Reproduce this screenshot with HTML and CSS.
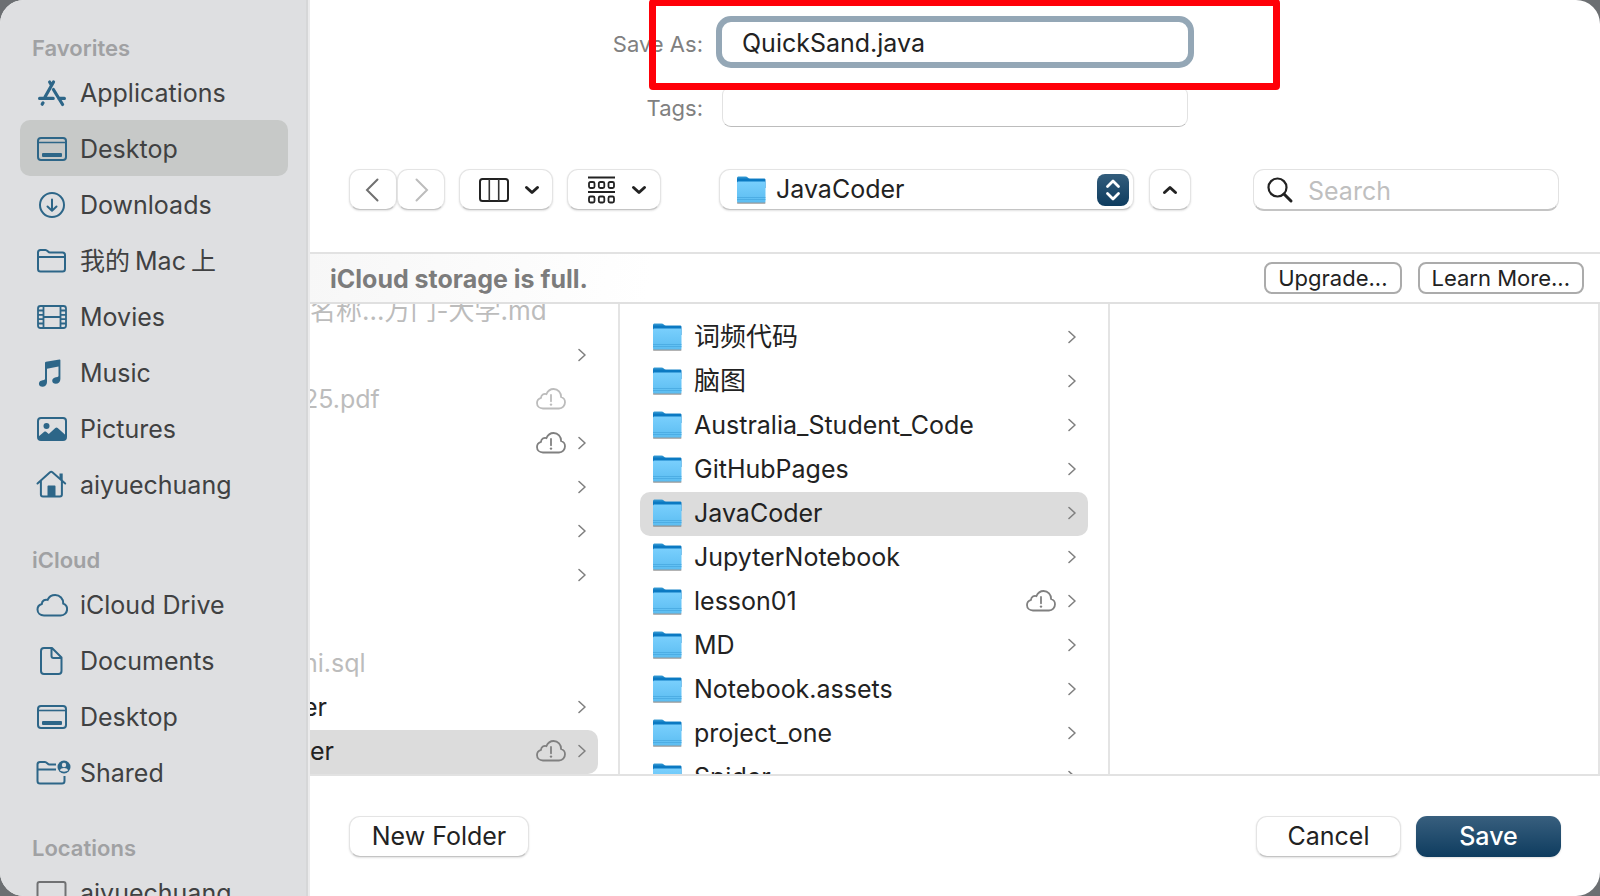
FILE: index.html
```html
<!DOCTYPE html>
<html lang="en">
<head>
<meta charset="utf-8">
<title>Save</title>
<link rel="stylesheet" href="styles.css">
</head>
<body>
<svg class="sprite" aria-hidden="true">
  <defs>
    <linearGradient id="folder-front" x1="0" y1="0" x2="0" y2="1"><stop offset="0" stop-color="#79cffd"/><stop offset="1" stop-color="#5cbdf1"/></linearGradient>
    <linearGradient id="folder-back" x1="0" y1="0" x2="0" y2="1"><stop offset="0" stop-color="#3d9fd6"/><stop offset=".25" stop-color="#0b79c2"/></linearGradient>
  </defs>
  <symbol id="apps" viewBox="0 0 32 32"><g fill="none" stroke="currentColor" stroke-width="3.2" stroke-linecap="round"><path d="M17.5 5 9 20M13.600 5l1.800 3M17.400 12.500l9.200 15M3.600 21.400h13.600M22.800 21.400h5.600M6.200 27.200l.8-1.300"/></g></symbol>
  <symbol id="desktop" viewBox="0 0 32 32"><rect x="2" y="5" width="28" height="22" rx="3" fill="none" stroke="currentColor" stroke-width="2"/><path d="M2 9.500h28" stroke="currentColor" stroke-width="1.600"/><rect x="6" y="20" width="20" height="4" rx="1" fill="currentColor"/></symbol>
  <symbol id="downloads" viewBox="0 0 32 32"><g fill="none" stroke="currentColor" stroke-width="2" stroke-linecap="round" stroke-linejoin="round"><circle cx="16" cy="16" r="12"/><path d="M16 10.500v11M11.500 17.500l4.500 4.300 4.500-4.300"/></g></symbol>
  <symbol id="folder-line" viewBox="0 0 32 32"><path d="M2 24V7.500C2 6 3 5 4.500 5h5c2 0 2.500 2.500 4.500 2.500h12.500C28 7.500 29 8.500 29 10v14c0 1.500-1 2.500-2.500 2.500h-22C3 26.500 2 25.500 2 24ZM2 12h27" fill="none" stroke="currentColor" stroke-width="2"/></symbol>
  <symbol id="movies" viewBox="0 0 32 32"><g fill="none" stroke="currentColor" stroke-width="1.800"><rect x="2" y="5" width="28" height="22" rx="2.500"/><path d="M7.500 5v22M24.500 5v22M7.500 16h17M2 9.500h5.500M2 13.800h5.500M2 18.200h5.500M2 22.500h5.500M24.500 9.500H30M24.500 13.800H30M24.500 18.200H30M24.500 22.500H30"/></g></symbol>
  <symbol id="music" viewBox="0 0 32 32"><path d="M9 6.200c0-.8.300-1.200 1-1.400L23.500 2.500c.6-.1.900.2.900.8V22c0 3-2 4.800-4.700 4.800-2 0-3.500-1.300-3.500-3.100 0-2 1.500-3.100 3.700-3.500l1.600-.3c.7-.1 1-.5 1-1.200V9.500l-11.500 2.200V25c0 3-2 4.800-4.600 4.800-2 0-3.500-1.300-3.500-3.100 0-2 1.500-3.200 3.700-3.500l1.400-.3c.7-.1 1-.5 1-1.200Z" fill="currentColor"/></symbol>
  <symbol id="pictures" viewBox="0 0 32 32"><rect x="2" y="5" width="28" height="22" rx="3" fill="none" stroke="currentColor" stroke-width="2"/><circle cx="10.500" cy="13" r="3" fill="currentColor"/><path d="M2 24l6.200-5.200c.7-.5 1.200-.5 1.900 0l2.700 2.200 6.500-6c.8-.7 1.600-.7 2.400 0L30 22.500V25c0 1.500-1 2-2.500 2h-23C3 27 2 26 2 24Z" fill="currentColor"/></symbol>
  <symbol id="home" viewBox="0 0 32 32"><path d="M1.500 14.500 14 3.300c.9-.7 1.500-.7 2.400 0l12.800 11.200M4.900 12v13.500c0 1.300.7 2 2 2h17c1.300 0 2-.7 2-2V12" fill="none" stroke="currentColor" stroke-width="2" stroke-linecap="round"/><path d="M11.500 28V17.500c0-.7.400-1 1-1h6c.6 0 1 .3 1 1V28ZM23.500 4.500h3.200V12l-3.200-2.800Z" fill="currentColor"/></symbol>
  <symbol id="cloud" viewBox="0 0 32 32"><path d="M8 26.500C4.300 26.500 1.500 24 1.500 20.600c0-2.700 1.700-4.900 4.300-5.600 .2-3.300 3-5 5.800-4.100C13 7.800 16 6 19.200 6c4.700 0 8.200 3.800 8 8.600 2.400.8 3.900 2.900 3.900 5.500 0 3.600-2.700 6.400-6.400 6.400Z" fill="none" stroke="currentColor" stroke-width="2"/></symbol>
  <symbol id="document" viewBox="0 0 32 32"><path d="M8 3h8l9.500 9.500V26c0 2-1 3-3 3H8c-2 0-3-1-3-3V6c0-2 1-3 3-3ZM15.500 3v8c0 1.300.7 2 2 2h8" fill="none" stroke="currentColor" stroke-width="2" stroke-linejoin="round"/></symbol>
  <symbol id="shared" viewBox="0 0 36 32"><path d="M20 7.500h-6.500C11.500 7.500 11 5 9 5H4C2.500 5 1.500 6 1.500 7.500V24c0 1.500 1 2.500 2.500 2.500h22c1.500 0 2.500-1 2.500-2.500v-5M1.500 12.500H20" fill="none" stroke="currentColor" stroke-width="2"/><circle cx="28" cy="10" r="6.500" fill="currentColor"/><circle cx="28" cy="8" r="2.200" fill="#dedfe1"/><path d="M24 13.500c.6-3.200 7.400-3.200 8 0-2 1.500-6 1.500-8 0Z" fill="#dedfe1"/></symbol>
  <symbol id="computer" viewBox="0 0 32 32"><rect x="1.500" y="5" width="28" height="20" rx="2" fill="none" stroke="currentColor" stroke-width="2"/><path d="M0 28h31" stroke="currentColor" stroke-width="2"/></symbol>
  <symbol id="folder" viewBox="0 0 30 30"><path d="M1 3.500C1 2 1.500 1.500 3 1.500h6.500c2 0 2.500 2 4.500 2H28c1 0 1.500.5 1.500 1.500v8H1Z" fill="url(#folder-back)"/><rect x="1" y="27" width="28.500" height="1.800" rx=".7" fill="#777" opacity=".75"/><path d="M1 8c0-1 .5-1.500 1.500-1.500H28c1 0 1.500.5 1.500 1.500v18c0 1-.5 1.500-1.500 1.500H2.500C1.500 27.500 1 27 1 26Z" fill="url(#folder-front)"/><path d="M1 22.500h28.500M1 24.500h28.500" stroke="#48a8df" stroke-width=".8"/></symbol>
  <symbol id="cloud-alert" viewBox="0 0 32 24"><path d="M8 21.500c-3.500 0-6-2.300-6-5.500 0-2.500 1.600-4.500 4-5.200.2-2.900 2.800-4.500 5.400-3.700C12.700 4 15.500 2 18.600 2c4.400 0 7.600 3.500 7.500 8 2.200.7 3.900 2.500 3.900 5.200 0 3.400-2.500 6.300-6 6.300Z" fill="none" stroke="currentColor" stroke-width="1.800"/><path d="M16 8v6.300" stroke="currentColor" stroke-width="1.800" stroke-linecap="round"/><circle cx="16" cy="17.600" r="1.200" fill="currentColor"/></symbol>
  <symbol id="chevron" viewBox="0 0 10 14"><path d="M2 1.500 8 7l-6 5.500" fill="none" stroke="currentColor" stroke-width="1.600" stroke-linecap="round" stroke-linejoin="round"/></symbol>
  <symbol id="down" viewBox="0 0 16 10"><path d="M2.500 2.500 8 7.500l5.500-5" fill="none" stroke="currentColor" stroke-width="3" stroke-linecap="round" stroke-linejoin="round"/></symbol>
</svg>

<div class="dialog">
  <nav class="sidebar" aria-label="Places">
    <h2 class="group">Favorites</h2>
    <a class="place" href="#"><svg class="icon"><use href="#apps"/></svg>Applications</a>
    <a class="place place-active" href="#"><svg class="icon"><use href="#desktop"/></svg>Desktop</a>
    <a class="place" href="#"><svg class="icon"><use href="#downloads"/></svg>Downloads</a>
    <a class="place" href="#"><svg class="icon"><use href="#folder-line"/></svg><span class="mixed"><span>我的</span><span>Mac</span><span>上</span></span></a>
    <a class="place" href="#"><svg class="icon"><use href="#movies"/></svg>Movies</a>
    <a class="place" href="#"><svg class="icon"><use href="#music"/></svg>Music</a>
    <a class="place" href="#"><svg class="icon"><use href="#pictures"/></svg>Pictures</a>
    <a class="place" href="#"><svg class="icon"><use href="#home"/></svg>aiyuechuang</a>
    <h2 class="group">iCloud</h2>
    <a class="place" href="#"><svg class="icon"><use href="#cloud"/></svg>iCloud Drive</a>
    <a class="place" href="#"><svg class="icon"><use href="#document"/></svg>Documents</a>
    <a class="place" href="#"><svg class="icon"><use href="#desktop"/></svg>Desktop</a>
    <a class="place" href="#"><svg class="icon icon-wide"><use href="#shared"/></svg>Shared</a>
    <h2 class="group">Locations</h2>
    <a class="place" href="#"><svg class="icon icon-gray"><use href="#computer"/></svg>aiyuechuang</a>
  </nav>

  <main class="main">
    <form class="fields">
      <label class="label" for="filename">Save As:</label>
      <input class="filename" id="filename" type="text" value="QuickSand.java">
      <label class="label" for="tags">Tags:</label>
      <input class="tags" id="tags" type="text">
    </form>
    <div class="highlight"></div>

    <div class="toolbar">
      <div class="tools">
        <div class="history">
          <button class="button nav" type="button" aria-label="Back"><svg width="14" height="24" viewBox="0 0 14 24"><path d="M12.500 1.500 2 12l10.500 10.500" fill="none" stroke="#707070" stroke-width="2" stroke-linecap="round"/></svg></button>
          <button class="button nav" type="button" aria-label="Forward"><svg width="14" height="24" viewBox="0 0 14 24"><path d="M1.500 1.500 12 12 1.500 22.500" fill="none" stroke="#bcbcbc" stroke-width="2" stroke-linecap="round"/></svg></button>
        </div>
        <button class="button view" type="button" aria-label="Column view"><svg width="32" height="26" viewBox="0 0 32 26"><rect x="2" y="2" width="28" height="22" rx="2.500" fill="none" stroke="#222" stroke-width="2"/><path d="M11.300 2v22M20.700 2v22" stroke="#333" stroke-width="1.600"/></svg><svg width="16" height="10"><use href="#down"/></svg></button>
        <button class="button view" type="button" aria-label="Group items"><svg width="30" height="30" viewBox="0 0 30 30"><path d="M1 2.500h27M1 17h27" stroke="#222" stroke-width="1.800"/><g fill="none" stroke="#222" stroke-width="1.800"><rect x="2" y="7" width="5.500" height="6" rx="1.500"/><rect x="11.800" y="7" width="5.500" height="6" rx="1.500"/><rect x="21.500" y="7" width="5.500" height="6" rx="1.500"/><rect x="2" y="21.500" width="5.500" height="6" rx="1.500"/><rect x="11.800" y="21.500" width="5.500" height="6" rx="1.500"/><rect x="21.500" y="21.500" width="5.500" height="6" rx="1.500"/></g></svg><svg width="16" height="10"><use href="#down"/></svg></button>
      </div>
      <div class="location">
        <div class="button popup">
          <svg class="folder"><use href="#folder"/></svg>
          <select class="popup-select" aria-label="Location"><option>JavaCoder</option></select>
          <span class="stepper"><svg width="16" height="24" viewBox="0 0 16 24"><path d="M2.500 8.500 8 3l5.500 5.500M2.500 15.500 8 21l5.500-5.500" fill="none" stroke="#fff" stroke-width="2.800" stroke-linecap="round" stroke-linejoin="round"/></svg></span>
        </div>
        <button class="button collapse" type="button" aria-label="Collapse"><svg width="16" height="10" viewBox="0 0 16 10"><path d="M2.500 7.500 8 2.500l5.500 5" fill="none" stroke="#222" stroke-width="3" stroke-linecap="round" stroke-linejoin="round"/></svg></button>
      </div>
      <label class="search"><svg width="28" height="28" viewBox="0 0 28 28"><circle cx="11.500" cy="11.500" r="9" fill="none" stroke="#222" stroke-width="2.200"/><path d="m18 18 7 7" stroke="#222" stroke-width="3" stroke-linecap="round"/></svg><input class="search-input" type="search" placeholder="Search" aria-label="Search"></label>
    </div>

    <div class="banner">
      <strong class="banner-text">iCloud storage is full.</strong>
      <button class="pill" type="button">Upgrade...</button>
      <button class="pill" type="button">Learn More...</button>
    </div>

    <div class="browser">
      <ul class="column column-parent">
        <li class="row row-dim"><span class="name name-cjk">名称…万门-大学.md</span></li>
        <li class="row"><span class="name"></span><svg class="chevron"><use href="#chevron"/></svg></li>
        <li class="row row-dim"><span class="name name-cut">25.pdf</span><svg class="alert"><use href="#cloud-alert"/></svg><span class="chevron"></span></li>
        <li class="row"><span class="name"></span><svg class="alert"><use href="#cloud-alert"/></svg><svg class="chevron"><use href="#chevron"/></svg></li>
        <li class="row"><span class="name"></span><svg class="chevron"><use href="#chevron"/></svg></li>
        <li class="row"><span class="name"></span><svg class="chevron"><use href="#chevron"/></svg></li>
        <li class="row"><span class="name"></span><svg class="chevron"><use href="#chevron"/></svg></li>
        <li class="row"></li>
        <li class="row row-dim"><span class="name name-cut">ni.sql</span></li>
        <li class="row"><span class="name name-cut">er</span><svg class="chevron"><use href="#chevron"/></svg></li>
        <li class="row row-active"><span class="name">er</span><svg class="alert"><use href="#cloud-alert"/></svg><svg class="chevron"><use href="#chevron"/></svg></li>
      </ul>
      <ul class="column column-folder">
        <li class="row"><svg class="folder"><use href="#folder"/></svg><span class="name name-cjk">词频代码</span><svg class="chevron"><use href="#chevron"/></svg></li>
        <li class="row"><svg class="folder"><use href="#folder"/></svg><span class="name name-cjk">脑图</span><svg class="chevron"><use href="#chevron"/></svg></li>
        <li class="row"><svg class="folder"><use href="#folder"/></svg><span class="name">Australia_Student_Code</span><svg class="chevron"><use href="#chevron"/></svg></li>
        <li class="row"><svg class="folder"><use href="#folder"/></svg><span class="name">GitHubPages</span><svg class="chevron"><use href="#chevron"/></svg></li>
        <li class="row row-active"><svg class="folder"><use href="#folder"/></svg><span class="name">JavaCoder</span><svg class="chevron"><use href="#chevron"/></svg></li>
        <li class="row"><svg class="folder"><use href="#folder"/></svg><span class="name">JupyterNotebook</span><svg class="chevron"><use href="#chevron"/></svg></li>
        <li class="row"><svg class="folder"><use href="#folder"/></svg><span class="name">lesson01</span><svg class="alert"><use href="#cloud-alert"/></svg><svg class="chevron"><use href="#chevron"/></svg></li>
        <li class="row"><svg class="folder"><use href="#folder"/></svg><span class="name">MD</span><svg class="chevron"><use href="#chevron"/></svg></li>
        <li class="row"><svg class="folder"><use href="#folder"/></svg><span class="name">Notebook.assets</span><svg class="chevron"><use href="#chevron"/></svg></li>
        <li class="row"><svg class="folder"><use href="#folder"/></svg><span class="name">project_one</span><svg class="chevron"><use href="#chevron"/></svg></li>
        <li class="row"><svg class="folder"><use href="#folder"/></svg><span class="name">Spider</span><svg class="chevron"><use href="#chevron"/></svg></li>
      </ul>
      <ul class="column column-empty"></ul>
    </div>

    <footer class="footer">
      <button class="button new-folder" type="button">New Folder</button>
      <button class="button action" type="button">Cancel</button>
      <button class="button action save" type="button">Save</button>
    </footer>
  </main>
</div>
</body>
</html>
```
FILE: styles.css
```css
* {
  box-sizing: border-box;
}

body {
  margin: 0;
  background: #6c6f72;
  color: #222;
  font-family: Inter, "Noto Sans CJK SC", sans-serif;
  font-size: 25px;
  line-height: 32px;
}

button,
input,
select {
  color: inherit;
  font: inherit;
}

ul {
  margin: 0;
  padding: 0;
  list-style: none;
}

.sprite {
  position: absolute;
  width: 0;
  height: 0;
}

.dialog {
  display: flex;
  height: 100vh;
  border-radius: 24px;
  background: #fff;
  overflow: hidden;
}

/* Sidebar */

.sidebar {
  flex: none;
  width: 310px;
  padding: 0 20px;
  border-right: 2px solid #ebebec;
  background: #dedfe1;
  box-shadow: inset -2px 0 #d6d7d8;
  overflow: hidden;
}

.group {
  margin: 0;
  padding: 32px 12px 0;
  color: #a0a1a3;
  font-size: 22px;
  font-weight: 600;
  line-height: 32px;
}

.place {
  display: flex;
  align-items: center;
  gap: 12px;
  height: 56px;
  padding: 2px 0 0 16px;
  border-radius: 10px;
  color: #404142;
  text-decoration: none;
}

.place-active {
  background: #c7c9c8;
}

.mixed {
  display: flex;
  gap: 5px;
}

.icon {
  flex: none;
  width: 32px;
  height: 32px;
  color: #2d6688;
}

.icon-wide {
  width: 36px;
  margin-right: -4px;
}

.icon-gray {
  color: #707173;
}

/* Main pane */

.main {
  position: relative;
  display: flex;
  flex: 1;
  flex-direction: column;
  min-width: 0;
}

.fields {
  display: grid;
  grid-template-columns: 1fr 466px 1fr;
  align-items: center;
  gap: 24px 19px;
  padding-top: 22px;
}

.label {
  grid-column: 1;
  padding-top: 3px;
  color: #808080;
  font-size: 22px;
  text-align: right;
}

.filename,
.tags {
  width: 100%;
  height: 40px;
  padding: 2px 20px 0;
  border: 0;
  border-radius: 9px;
  background: #fff;
}

.filename {
  outline: 6px solid #94a7b6;
}

.tags {
  height: 41px;
  border: 1px solid #e2e2e2;
  border-bottom-color: #bcbcbc;
}

.highlight {
  position: absolute;
  top: -1px;
  left: calc(50% - 306px);
  width: 631px;
  height: 91px;
  border: 7px solid #ff0008;
  border-radius: 4px;
  pointer-events: none;
}

.toolbar {
  display: grid;
  grid-template-columns: 1fr 472px 1fr;
  padding: 42px 0 41px;
}

.button {
  display: flex;
  align-items: center;
  justify-content: center;
  height: 41px;
  padding: 0;
  border: 1px solid #e4e4e4;
  border-bottom-color: #c4c4c4;
  border-radius: 11px;
  background: #fff;
  box-shadow: 0 1px 2px #0000001f;
}

.tools {
  display: flex;
  gap: 14px;
  padding-left: 39px;
}

.history {
  display: flex;
}

.nav {
  width: 48px;
  padding-right: 2px;
}

.nav + .nav {
  padding: 0 0 0 2px;
}

.view {
  gap: 14px;
  width: 94px;
  padding-left: 6px;
}

.location {
  display: flex;
  gap: 15px;
}

.popup {
  flex: 1;
  padding: 0 4px 0 16px;
}

.popup-select {
  flex: 1;
  min-width: 0;
  padding: 0 10px 2px;
  border: 0;
  background: none;
  appearance: none;
}

.stepper {
  display: flex;
  align-items: center;
  justify-content: center;
  width: 32px;
  height: 32px;
  border-radius: 8px;
  background: linear-gradient(#335d7c, #0e3c5f);
}

.collapse {
  width: 42px;
}

.search {
  display: flex;
  align-items: center;
  gap: 14px;
  justify-self: end;
  width: 306px;
  height: 42px;
  margin-right: 41px;
  padding-left: 12px;
  border: 1px solid #e2e2e2;
  border-bottom: 2px solid #c4c4c4;
  border-radius: 11px;
}

.search-input {
  flex: 1;
  min-width: 0;
  padding: 2px 0 0;
  border: 0;
  background: none;
}

.search-input::placeholder {
  color: #bfbfbf;
}

.banner {
  display: flex;
  align-items: center;
  gap: 16px;
  height: 52px;
  padding: 0 16px 0 20px;
  border-top: 2px solid #e2e2e2;
  border-bottom: 2px solid #e0e0e0;
  background: linear-gradient(100deg, #f7f7f7, #fff 340px);
}

.banner-text {
  flex: 1;
  padding-top: 2px;
  color: #7c7c7c;
  font-weight: 700;
}

.pill {
  height: 32px;
  padding: 0 12px;
  border: 2px solid #ababab;
  border-radius: 8px;
  background: #fff;
  font-size: 22px;
  line-height: 28px;
}

/* Column browser */

.browser {
  display: flex;
  flex: 1;
  min-height: 0;
  border-bottom: 2px solid #e2e2e2;
  overflow: hidden;
}

.column {
  flex: none;
  padding: 12px 20px 0;
  border-right: 2px solid #e4e4e4;
}

.column-parent {
  width: 310px;
  margin-top: -14px;
  padding: 0 20px 0 0;
}

.column-folder {
  width: 490px;
}

.column-empty {
  flex: 1;
}

.row {
  display: flex;
  align-items: center;
  height: 44px;
  padding: 0 11px 2px 12px;
  border-radius: 10px;
}

.column-parent .row {
  padding-left: 0;
  border-radius: 0 10px 10px 0;
}

.row-active {
  background: #dcdcdc;
}

.row-dim {
  color: #bcbcbc;
}

.name {
  flex: 1;
  white-space: nowrap;
}

.name-cjk {
  font-size: 26px;
}

.folder {
  flex: none;
  width: 30px;
  height: 30px;
}

.folder + .name {
  margin-left: 12px;
}

.name-cut {
  margin-left: -7px;
}

.alert {
  width: 32px;
  height: 24px;
  margin-right: 10px;
  color: #808080;
}

.row-dim .alert {
  color: #bcbcbc;
}

.chevron {
  width: 10px;
  height: 14px;
  color: #808080;
}

/* Footer */

.footer {
  display: flex;
  gap: 15px;
  height: 120px;
  padding: 40px 39px 0;
}

.new-folder {
  width: 180px;
  margin-right: auto;
  padding-bottom: 2px;
}

.action {
  width: 145px;
  padding-bottom: 2px;
}

.save {
  border: 0;
  background: linear-gradient(#385f7e, #0e3c5f);
  color: #fff;
  font-weight: 500;
}
```
